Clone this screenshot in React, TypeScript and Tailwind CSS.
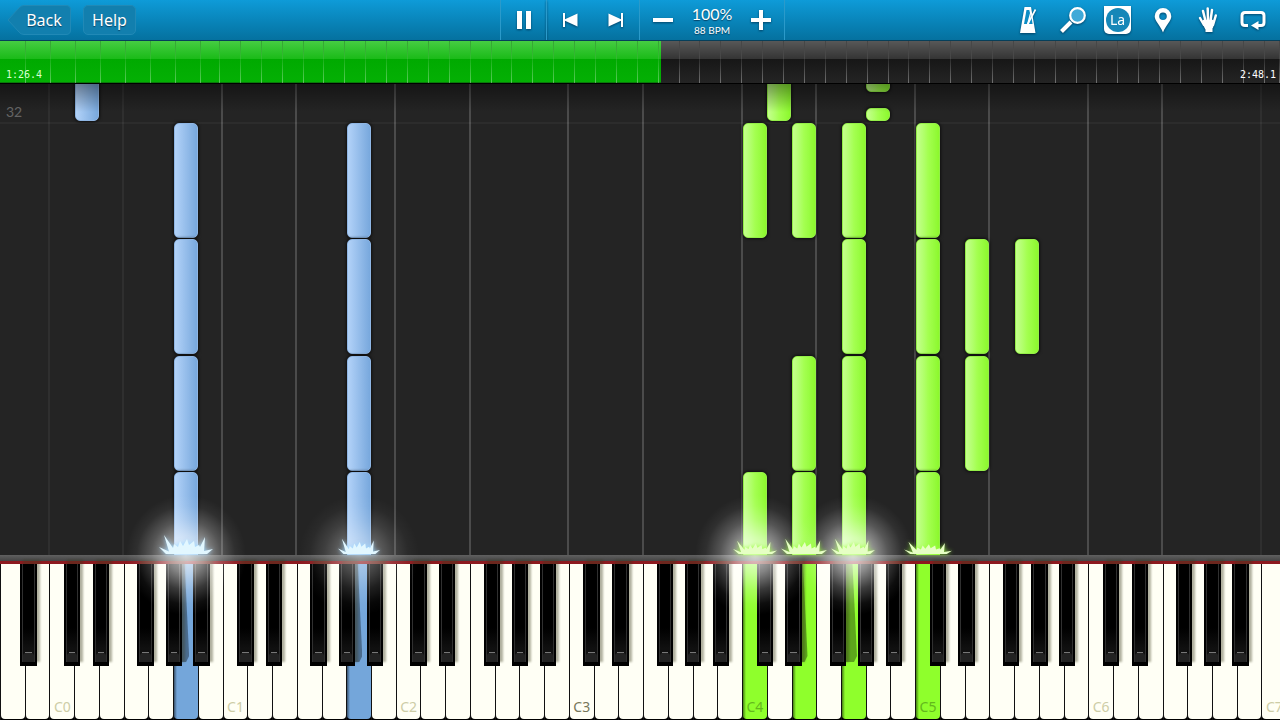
import { useState } from "react";

const KEY_COUNT = 52;
const OCTAVE = ["A", "B", "C", "D", "E", "F", "G"];

// left edge of each black key, as a share of the white key before it
const BLACK_OFFSET: Record<string, string> = {
  A: "left-[81%]",
  C: "left-[57%]",
  D: "left-[74%]",
  F: "left-[53%]",
  G: "left-[68%]",
};

const whiteKeys = Array.from({ length: KEY_COUNT }, (_, i) => ({
  index: i,
  letter: OCTAVE[i % 7],
  octave: Math.floor((i - 2) / 7),
}));

type Hand = "left" | "right";

type Note = {
  key: number;
  top: number;
  height: number;
  hand: Hand;
};

// key is the white key index, top and height are pixels from the top of the roll
const notes: Note[] = [
  { key: 3, top: -20, height: 57, hand: "left" },
  { key: 7, top: 39, height: 115, hand: "left" },
  { key: 7, top: 155, height: 115, hand: "left" },
  { key: 7, top: 272, height: 115, hand: "left" },
  { key: 7, top: 388, height: 115, hand: "left" },
  { key: 14, top: 39, height: 115, hand: "left" },
  { key: 14, top: 155, height: 115, hand: "left" },
  { key: 14, top: 272, height: 115, hand: "left" },
  { key: 14, top: 388, height: 115, hand: "left" },
  { key: 31, top: -20, height: 57, hand: "right" },
  { key: 35, top: -20, height: 28, hand: "right" },
  { key: 35, top: 24, height: 13, hand: "right" },
  { key: 30, top: 39, height: 115, hand: "right" },
  { key: 30, top: 388, height: 115, hand: "right" },
  { key: 32, top: 39, height: 115, hand: "right" },
  { key: 32, top: 272, height: 115, hand: "right" },
  { key: 32, top: 388, height: 115, hand: "right" },
  { key: 34, top: 39, height: 115, hand: "right" },
  { key: 34, top: 155, height: 115, hand: "right" },
  { key: 34, top: 272, height: 115, hand: "right" },
  { key: 34, top: 388, height: 115, hand: "right" },
  { key: 37, top: 39, height: 115, hand: "right" },
  { key: 37, top: 155, height: 115, hand: "right" },
  { key: 37, top: 272, height: 115, hand: "right" },
  { key: 37, top: 388, height: 115, hand: "right" },
  { key: 39, top: 155, height: 115, hand: "right" },
  { key: 39, top: 272, height: 115, hand: "right" },
  { key: 41, top: 155, height: 115, hand: "right" },
];

const pressed: Record<number, Hand> = {
  7: "left",
  14: "left",
  30: "right",
  32: "right",
  34: "right",
  37: "right",
};

const glows = [
  { key: 7, strength: 0.9 },
  { key: 14, strength: 0.5 },
  { key: 30, strength: 0.9 },
  { key: 34, strength: 0.95 },
];

const sparks = [
  { key: 7, width: 54, height: 20 },
  { key: 14, width: 42, height: 16 },
  { key: 30, width: 44, height: 14 },
  { key: 32, width: 46, height: 16 },
  { key: 34, width: 44, height: 16 },
  { key: 37, width: 48, height: 13 },
];

// length of each bar of the song
const bars = [260, ...Array(7).fill(250), 190, ...Array(50).fill(209), 150];
const songLength = bars.reduce((sum, bar) => sum + bar, 0);

const centerOf = (key: number) => `${((key + 0.5) / KEY_COUNT) * 100}%`;

function Toolbar() {
  const [playing, setPlaying] = useState(true);
  const [speed, setSpeed] = useState(100);
  const iconButton = "flex h-full w-[45px] items-center justify-center drop-shadow-[0_1px_1px_rgba(0,40,70,0.7)]";

  return (
    <header className="grid h-[41px] shrink-0 grid-cols-[500fr_285px_495fr] border-b border-[#063f5a] bg-linear-to-b from-[#0e9bd8] to-[#05719f] text-white">
      <div className="flex items-center gap-3 pl-[7px]">
        <button type="button" className="relative h-[30px] w-[64px] pl-[10px] text-base text-shadow-[0_1px_1px_rgba(0,40,70,0.7)]">
          <svg viewBox="0 0 64 30" className="absolute inset-0 size-full" fill="#127fae" stroke="#2189b6">
            <path d="M1 15 L12 3 Q14 .5 17 .5 H59 Q63.500 .5 63.500 5 V25 Q63.500 29.500 59 29.500 H17 Q14 29.500 12 27 Z" />
          </svg>
          <span className="relative">Back</span>
        </button>
        <button type="button" className="h-[30px] w-[53px] rounded-[5px] border border-[#2189b6] bg-[#127fae] text-base text-shadow-[0_1px_1px_rgba(0,40,70,0.7)]">
          Help
        </button>
      </div>

      <div className="flex border-r border-l border-[#2b9aca]">
        <button type="button" aria-label="Pause" aria-pressed={playing} onClick={() => setPlaying(!playing)} className="flex w-[46px] items-center justify-center border-r border-[#2b9aca] drop-shadow-[0_1px_1px_rgba(0,40,70,0.7)]">
          <svg viewBox="0 0 16 18" className="h-[18px] w-4" fill="currentColor">
            <path d="M1 0h5v18H1zM10 0h5v18h-5z" />
          </svg>
        </button>
        <div className="flex w-[93px] items-center justify-around border-r border-[#2b9aca]">
          <button type="button" aria-label="Previous" className="drop-shadow-[0_1px_1px_rgba(0,40,70,0.7)]">
            <svg viewBox="0 0 16 14" className="h-3.5 w-4" fill="currentColor">
              <path d="M1 0h2v6.300L15.500 .5v13L3 7.700V14H1z" />
            </svg>
          </button>
          <button type="button" aria-label="Next" className="drop-shadow-[0_1px_1px_rgba(0,40,70,0.7)]">
            <svg viewBox="0 0 16 14" className="h-3.5 w-4" fill="currentColor">
              <path d="M15 0h-2v6.300L.5 .5v13L13 7.700V14h2z" />
            </svg>
          </button>
        </div>
        <div className="flex flex-1 items-center justify-center gap-3">
          <button type="button" aria-label="Slower" onClick={() => setSpeed(speed - 5)} className="drop-shadow-[0_1px_1px_rgba(0,40,70,0.7)]">
            <svg viewBox="0 0 20 20" className="size-5" fill="currentColor">
              <path d="M0 8h20v4H0z" />
            </svg>
          </button>
          <div className="flex w-[54px] flex-col items-center font-[Lato,sans-serif] text-shadow-[0_1px_1px_rgba(0,40,70,0.7)]">
            <span className="text-base leading-5">{`${speed}%`}</span>
            <span className="text-[10px] leading-3 whitespace-nowrap">88 BPM</span>
          </div>
          <button type="button" aria-label="Faster" onClick={() => setSpeed(speed + 5)} className="drop-shadow-[0_1px_1px_rgba(0,40,70,0.7)]">
            <svg viewBox="0 0 20 20" className="size-5" fill="currentColor">
              <path d="M8 0h4v8h8v4h-8v8H8v-8H0V8h8z" />
            </svg>
          </button>
        </div>
      </div>

      <div className="flex items-center justify-end pr-[5px]">
        <button type="button" aria-label="Metronome" className={iconButton}>
          <svg viewBox="0 0 18 28" className="h-7 w-[18px]" fill="none">
            <path d="M5.500 1H12L16.500 27H1z" fill="currentColor" />
            <path d="M7.500 4H10.300L11 7 8 18H5z" fill="#0c8dc5" />
            <path d="M12 8 13.600 18H10z" fill="#0c8dc5" />
            <path d="M16.500 3.500 8.500 18.500" stroke="currentColor" strokeWidth="1.600" />
          </svg>
        </button>
        <button type="button" aria-label="Zoom" className={iconButton}>
          <svg viewBox="0 0 28 28" className="size-7" fill="none" stroke="currentColor">
            <path d="M2.500 25.500 12 16" strokeWidth="4" />
            <circle cx="18.500" cy="9.500" r="7.300" fill="#3fa9d8" strokeWidth="2.200" />
          </svg>
        </button>
        <button type="button" aria-label="Note names" className={iconButton}>
          <span className="flex h-7 w-[27px] items-center justify-center rounded-b-[5px] bg-white">
            <span className="flex size-6 items-center justify-center rounded-full bg-[#1687b8] font-['Noto_Sans',sans-serif] text-sm leading-none">La</span>
          </span>
        </button>
        <button type="button" aria-label="Bookmark" className={iconButton}>
          <svg viewBox="0 0 18 26" className="h-[26px] w-[18px]" fill="currentColor" fillRule="evenodd">
            <path d="M9 1a8.300 8.300 0 0 1 8.300 8.300C17.300 14 12 18 9 25.500 6 18 .7 14 .7 9.300A8.300 8.300 0 0 1 9 1zm0 4.500a3.800 3.800 0 1 0 0 7.600 3.800 3.800 0 0 0 0-7.600z" />
          </svg>
        </button>
        <button type="button" aria-label="Hands" className={iconButton}>
          <svg viewBox="0 0 20 28" className="h-7 w-5" fill="none" stroke="currentColor" strokeWidth="2.500" strokeLinecap="round">
            <path d="M2 12 6 19M5 5 7.500 15M9.700 2.500 10 14M14 4 12.500 15M17.800 9.500 15 19" />
            <path d="M5.500 14H15L16 17 14.500 22V26H7.500V23L5 18.500z" fill="currentColor" stroke="none" />
            <path d="M6 15 8 22M14.500 15 14 21" />
          </svg>
        </button>
        <button type="button" aria-label="Loop" className={iconButton}>
          <svg viewBox="0 0 26 20" className="h-5 w-[26px]" fill="none">
            <path d="M8 15.500H5Q2 15.500 2 12.500V5.500Q2 2.500 5 2.500H21Q24 2.500 24 5.500V12.500Q24 15.500 21 15.500H18" stroke="currentColor" strokeWidth="3" />
            <path d="M11 15.500 18.500 11V20z" fill="currentColor" />
          </svg>
        </button>
      </div>
    </header>
  );
}

function Timeline() {
  return (
    <section className="relative flex h-[43px] shrink-0 border-b border-black bg-[linear-gradient(#585858,#343434_43%,#171717_44%,#242424)]">
      <div className="absolute inset-y-0 left-0 w-[51.64%] border-b border-[#0a7a0a] bg-[linear-gradient(#46cd42,#1bbb19_43%,#00aa00_45%,#04b004)]" />
      {bars.map((length, i) => (
        <div
          key={i}
          className="relative border-r border-transparent bg-[linear-gradient(rgba(0,0,0,0.2),rgba(255,255,255,0.12)_50%,rgba(255,255,255,0.35))] bg-[length:1px_100%] bg-[position:right] bg-no-repeat bg-origin-border"
          style={{ width: `${(length / songLength) * 100}%` }}
        />
      ))}
      <div className="absolute inset-x-1 bottom-0 flex justify-between pl-0.5 font-['DejaVu_Sans_Mono',monospace] text-[10px] leading-4 text-white">
        <span className="text-[#d8ffd0]">1:26.4</span>
        <span>2:48.1</span>
      </div>
    </section>
  );
}

function NoteBar({ note }: { note: Note }) {
  const look =
    note.hand === "left"
      ? "bg-linear-to-r from-[#b2d2f8] to-[#78a8dd] border-[#8fb6e4]"
      : "bg-linear-to-r from-[#c4ff8c] via-[#a4ff50] to-[#8cf82c] border-[#94ee48]";
  return (
    <div
      className={`absolute w-[1.87%] rounded-[5px] border shadow-[0_0_3px_1px_rgba(0,0,0,0.6)] ${look}`}
      style={{
        left: `${((note.key + 0.02) / KEY_COUNT) * 100}%`,
        top: note.top,
        height: note.height,
      }}
    />
  );
}

function Roll() {
  return (
    <section className="relative min-h-0 flex-1 overflow-hidden bg-[#242424]">
      <div className="relative flex h-full w-[100.5%]">
        {whiteKeys.map((k) => (
          <div
            key={k.index}
            className={
              k.letter === "C" || k.letter === "F"
                ? k.index < 6 || k.index > 50
                  ? "-ml-px flex-1 border-l-2 border-[#2f2f2f]"
                  : "-ml-px flex-1 border-l-2 border-[#4b4b4b]"
                : "flex-1"
            }
          />
        ))}
        <div className="absolute inset-x-0 top-[38px] h-0.5 bg-white/4" />
        {notes.map((n, i) => (
          <NoteBar key={i} note={n} />
        ))}
      </div>
      <div className="absolute inset-x-0 top-0 h-7 bg-linear-to-b from-black/40 to-transparent" />
      <span className="absolute top-5 left-1.5 font-[Lato,sans-serif] text-sm leading-4 text-[#646464]">32</span>
    </section>
  );
}

function Spark({ hand }: { hand: Hand }) {
  return (
    <svg
      viewBox="0 0 54 20"
      preserveAspectRatio="none"
      className={
        hand === "left"
          ? "size-full text-[#e2f7ff] drop-shadow-[0_0_2px_#9fd8ff]"
          : "size-full text-[#e6ffc4] drop-shadow-[0_0_2px_#9dff40]"
      }
      fill="currentColor"
    >
      <path d="M7 20 0 13 10 17.500 5 1 14 14 15 10 19 13 21 7 24 12 28 5 30 11 35 7 36 13 40 11 41 13 46 3 45 17 54 15 48 20z" />
    </svg>
  );
}

function Effects() {
  return (
    <div className="pointer-events-none absolute bottom-[165px] left-0 z-20 h-0 w-[100.5%]">
      {glows.map((g) => (
        <div
          key={g.key}
          className="absolute -top-[60px] -ml-[60px] h-[120px] w-[120px] bg-[radial-gradient(closest-side,rgba(255,255,255,0.85),rgba(255,255,255,0.58)_30%,rgba(255,255,255,0.25)_58%,rgba(255,255,255,0.06)_82%,transparent)]"
          style={{ left: centerOf(g.key), opacity: g.strength }}
        />
      ))}
      {sparks.map((s) => (
        <div
          key={s.key}
          className="absolute bottom-px -translate-x-1/2"
          style={{ left: centerOf(s.key), width: s.width, height: s.height }}
        >
          <Spark hand={pressed[s.key]} />
        </div>
      ))}
    </div>
  );
}

function BlackKey({ letter }: { letter: string }) {
  return (
    <button
      type="button"
      aria-label={`${letter} sharp`}
      className={`absolute top-0 z-10 h-[102px] w-[69%] border-x-2 border-b-4 border-black bg-[linear-gradient(90deg,#303030_1px,transparent_1px_calc(100%-1px),#303030_calc(100%-1px)),linear-gradient(#000_65%,#101010_86%)] shadow-[3px_-4px_2px_rgba(60,60,30,0.4)] ${BLACK_OFFSET[letter]}`}
    >
      <span className="absolute inset-x-px bottom-0 h-[9px] rounded-t-[3px] bg-[#222]" />
      <span className="absolute inset-x-[3px] bottom-[9px] h-px bg-[#777]" />
    </button>
  );
}

function Keyboard() {
  return (
    <section className="shrink-0 overflow-hidden bg-black">
      <div className="h-1.5 bg-linear-to-b from-[#606060] to-[#444]" />
      <div className="h-[3px] bg-[#8d1a1f]" />
      <div className="flex h-[156px] w-[100.5%]">
        {whiteKeys.map((k) => {
          const hand = pressed[k.index];
          const tone =
            hand === "left"
              ? "bg-[#74a6da]"
              : hand === "right"
                ? "bg-[#8fff2c]"
                : "bg-[#fffff5]";
          const label = hand
            ? "text-[#63b81c]"
            : k.octave === 3
              ? "text-[#77775a]"
              : "text-[#cdcda6]";
          // a black key overlaps the left side of this one and throws its shade on it
          const shaded = hand && k.letter !== "C" && k.letter !== "F";
          return (
            <div key={k.index} className="relative flex-1 border-l border-[#111]">
              <button
                type="button"
                aria-label={`${k.letter}${k.octave}`}
                className={`relative flex h-[155px] w-full items-end justify-center overflow-hidden rounded-b-[4px] pb-1 font-['Noto_Sans',sans-serif] text-sm leading-4 ${tone}`}
              >
                {hand && <span className="absolute inset-y-0 left-0 w-[3px] bg-linear-to-r from-black/50 to-transparent" />}
                {shaded && (
                  <span className="absolute top-0 left-0 h-[98px] w-[15px] bg-black/35 [clip-path:polygon(0_0,70%_0,100%_94%,80%_100%,0_100%)]" />
                )}
                {k.letter === "C" && <span className={`relative ${label}`}>{`C${k.octave}`}</span>}
              </button>
              {BLACK_OFFSET[k.letter] && k.index < KEY_COUNT - 1 && <BlackKey letter={k.letter} />}
            </div>
          );
        })}
      </div>
    </section>
  );
}

export default function App() {
  return (
    <main className="relative flex h-screen flex-col overflow-hidden bg-black font-['Noto_Sans',sans-serif]">
      <Toolbar />
      <Timeline />
      <Roll />
      <Keyboard />
      <Effects />
    </main>
  );
}
